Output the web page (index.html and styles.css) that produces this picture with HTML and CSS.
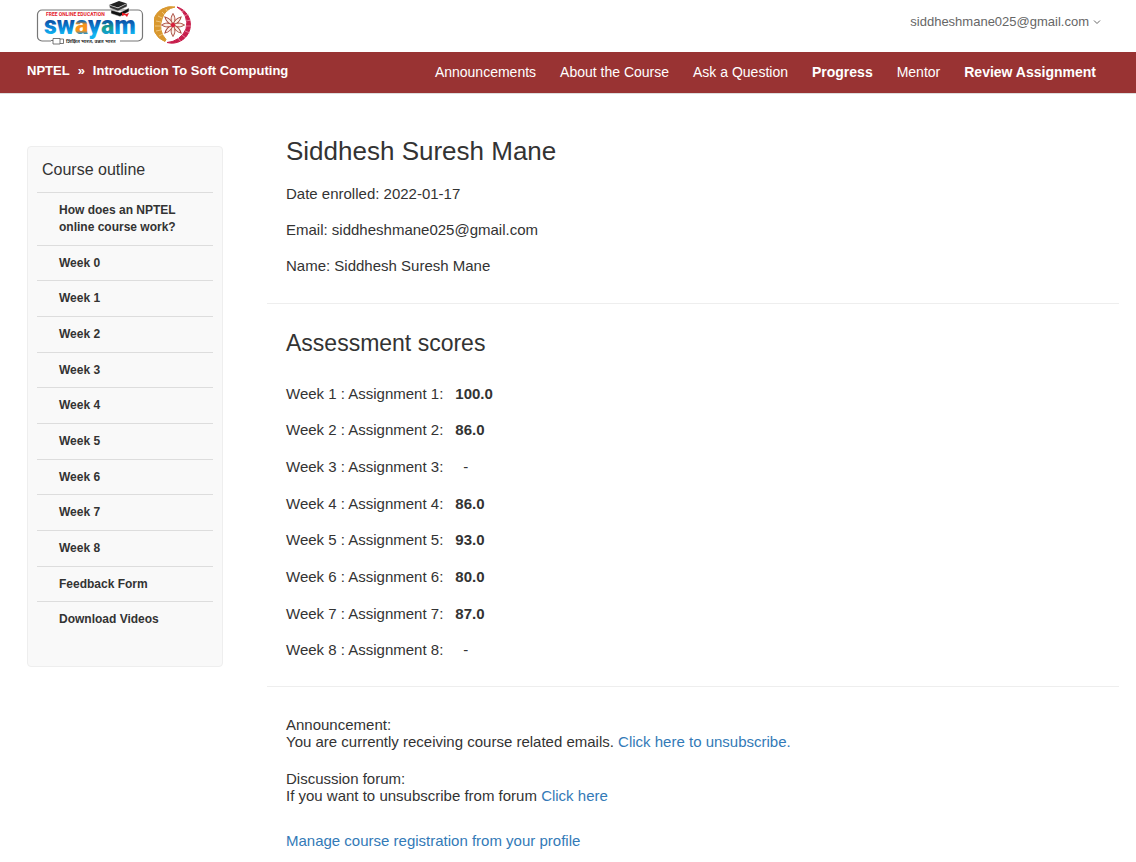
FILE: index.html
```html
<!DOCTYPE html>
<html lang="en">
<head>
<meta charset="utf-8">
<meta name="viewport" content="width=device-width, initial-scale=1">
<title>Introduction To Soft Computing - Progress</title>
<link rel="stylesheet" href="styles.css">
</head>
<body>
<header class="top">
  <a class="logos" href="#" aria-label="Swayam home">
    <svg class="logo-swayam" width="108" height="46" viewBox="0 0 108 46" aria-hidden="true">
      <defs>
        <linearGradient id="blue" gradientUnits="userSpaceOnUse" x1="0" y1="18" x2="0" y2="38">
          <stop offset="0.1" stop-color="#0c4da2"/><stop offset="0.5" stop-color="#0a86d8"/><stop offset="0.8" stop-color="#12b4f0"/>
        </linearGradient>
        <linearGradient id="amber" gradientUnits="userSpaceOnUse" x1="0" y1="18" x2="0" y2="34">
          <stop offset="0.2" stop-color="#1668b0"/><stop offset="0.4" stop-color="#f7941d"/><stop offset="0.8" stop-color="#f7941d"/><stop offset="1" stop-color="#1a8fd0"/>
        </linearGradient>
        <linearGradient id="teal" gradientUnits="userSpaceOnUse" x1="0" y1="18" x2="0" y2="34">
          <stop offset="0.2" stop-color="#0c5aa8"/><stop offset="0.6" stop-color="#16a08c"/><stop offset="1" stop-color="#12a0d8"/>
        </linearGradient>
      </defs>
      <path d="M15 41H6a4.500 4.500 0 0 1-4.500-4.500V14.500A4.500 4.500 0 0 1 6 10H102a4.500 4.500 0 0 1 4.500 4.500V36.500a4.500 4.500 0 0 1-4.500 4.500H84" fill="#fff" stroke="#777" stroke-width="1.200"/>
      <path d="M17 38.500h7v5.500h-7zM24 39h3.500v4.500H24M15 40.500h2" fill="#fff" stroke="#555" stroke-width=".8"/>
      <text class="logo-top" x="10" y="16">FREE ONLINE EDUCATION</text>
      <text class="logo-word" x="8" y="34" fill="url(#blue)">sw<tspan fill="url(#amber)">a</tspan>y<tspan fill="url(#teal)">a</tspan>m</text>
      <text class="logo-tag" x="30" y="43">शिक्षित भारत, उन्नत भारत</text>
      <path d="M73 5 83 1l8 2.500-9 4z" fill="#222"/>
      <path d="M73 5 82 8 91 3.500v3l-9 4.500-8-3z" fill="#333" stroke="#ddd" stroke-width=".5"/>
      <path d="M75 10 84 12.500 93 8v3.500l-9 5-9-3z" fill="#111" stroke="#ddd" stroke-width=".5"/>
      <path d="M86 12.500l4 1.500 3-1-2 4-2-2-3 1z" fill="#ed1c24"/>
    </svg>
    <svg class="logo-nptel" width="38" height="38" viewBox="0 0 38 38" aria-hidden="true">
      <path d="M21 1A18 18 0 0 0 11 35.500 L12 33.500A19 19 0 0 1 8 13 17 17 0 0 1 21 1z" fill="#d9982f" stroke="#d9982f"/>
      <path d="M23 1A18 18 0 0 1 13 36.500 22 22 0 0 0 32 23 19 19 0 0 0 23 1z" fill="#c81e4c" stroke="#c81e4c"/>
      <path d="M12 3l2 3M8 6l3 3M4 10l4 2M2 15l5 1M1 20h6M2 25l5-1M5 30l4-2" stroke="#fbe3b0" stroke-width=".6"/>
      <path d="M27 6l4-2M30 10l5-2M32 15l5-1M32 20h5M31 25l5 2M28 29l4 3M24 32l3 4" stroke="#f5b5c5" stroke-width=".6"/>
      <g fill="#fbeee6" stroke="#a8483c" stroke-width="1">
        <path id="petal" d="M19 19C16 14 17 11 19 7.500 21 11 22 14 19 19z"/>
        <use href="#petal" transform="rotate(45 19 19)"/><use href="#petal" transform="rotate(90 19 19)"/><use href="#petal" transform="rotate(135 19 19)"/><use href="#petal" transform="rotate(180 19 19)"/><use href="#petal" transform="rotate(225 19 19)"/><use href="#petal" transform="rotate(270 19 19)"/><use href="#petal" transform="rotate(315 19 19)"/>
      </g>
      <circle cx="19" cy="19" r="2.200" fill="#d8203c"/>
    </svg>
  </a>
  <button class="account" type="button">siddheshmane025@gmail.com
    <svg width="8" height="6" viewBox="0 0 8 6" aria-hidden="true"><path d="M1 1.500 4 4.500 7 1.500" fill="none" stroke="currentColor"/></svg>
  </button>
</header>
<div class="bar">
  <div class="crumbs"><a href="#">NPTEL</a><span>»</span><a href="#">Introduction To Soft Computing</a></div>
  <nav class="menu">
    <a href="#">Announcements</a>
    <a href="#">About the Course</a>
    <a href="#">Ask a Question</a>
    <a class="strong" href="#">Progress</a>
    <a href="#">Mentor</a>
    <a class="strong" href="#">Review Assignment</a>
  </nav>
</div>
<div class="page">
  <aside class="outline">
    <h2>Course outline</h2>
    <ul>
      <li><a href="#">How does an NPTEL online course work?</a></li>
      <li><a href="#">Week 0</a></li>
      <li><a href="#">Week 1</a></li>
      <li><a href="#">Week 2</a></li>
      <li><a href="#">Week 3</a></li>
      <li><a href="#">Week 4</a></li>
      <li><a href="#">Week 5</a></li>
      <li><a href="#">Week 6</a></li>
      <li><a href="#">Week 7</a></li>
      <li><a href="#">Week 8</a></li>
      <li><a href="#">Feedback Form</a></li>
      <li><a href="#">Download Videos</a></li>
    </ul>
  </aside>
  <main class="content">
    <section class="profile">
      <h1>Siddhesh Suresh Mane</h1>
      <p>Date enrolled: 2022-01-17</p>
      <p>Email: siddheshmane025@gmail.com</p>
      <p>Name: Siddhesh Suresh Mane</p>
    </section>
    <section class="assessment">
      <h2>Assessment scores</h2>
      <table class="scores">
        <tbody>
          <tr><th scope="row">Week 1 : Assignment 1:</th><td>100.0</td></tr>
          <tr><th scope="row">Week 2 : Assignment 2:</th><td>86.0</td></tr>
          <tr><th scope="row">Week 3 : Assignment 3:</th><td class="none">-</td></tr>
          <tr><th scope="row">Week 4 : Assignment 4:</th><td>86.0</td></tr>
          <tr><th scope="row">Week 5 : Assignment 5:</th><td>93.0</td></tr>
          <tr><th scope="row">Week 6 : Assignment 6:</th><td>80.0</td></tr>
          <tr><th scope="row">Week 7 : Assignment 7:</th><td>87.0</td></tr>
          <tr><th scope="row">Week 8 : Assignment 8:</th><td class="none">-</td></tr>
        </tbody>
      </table>
    </section>
    <section class="mail">
      <p>Announcement:<br>You are currently receiving course related emails. <a href="#">Click here to unsubscribe.</a></p>
      <p>Discussion forum:<br>If you want to unsubscribe from forum <a href="#">Click here</a></p>
      <p class="manage"><a href="#">Manage course registration from your profile</a></p>
    </section>
  </main>
</div>
</body>
</html>
```
FILE: styles.css
```css
* { box-sizing: border-box; }
body {
  margin: 0;
  background: #fff;
  color: #333;
  font: 15px/17px "Liberation Sans", Arial, sans-serif;
}
a { text-decoration: none; }
h1, h2, p, ul { margin: 0; padding: 0; font-weight: 400; }
.top {
  display: flex;
  justify-content: space-between;
  height: 52px;
  padding: 0 35px 0 36px;
}
.logos { display: flex; gap: 10px; }
.logo-nptel { margin-top: 6px; }
.logo-top { font: bold 5px Roboto, sans-serif; fill: #e3202b; }
.logo-word { font: 900 25px Roboto, sans-serif; }
.logo-tag { font: bold 5px "Noto Sans Devanagari", "Noto Sans", sans-serif; fill: #333; }
.account {
  display: flex;
  align-items: center;
  gap: 4px;
  align-self: flex-start;
  margin-top: 13px;
  padding: 0;
  border: 0;
  background: none;
  color: #666;
  font: 13px/17px "Liberation Sans", Arial, sans-serif;
}
.bar {
  display: flex;
  justify-content: space-between;
  align-items: center;
  height: 42px;
  padding: 0 40px 0 27px;
  background: #933;
  border-bottom: 1px solid #ddd;
  font-size: 14px;
}
.bar a { color: #fff; }
.crumbs {
  display: flex;
  gap: 8px;
  padding-bottom: 4px;
  color: #fff;
  font-size: 13px;
  font-weight: 700;
}
.menu { display: flex; gap: 24px; }
.strong { font-weight: 700; }
.page {
  display: flex;
  align-items: flex-start;
  gap: 44px;
  padding: 0 17px 12px 27px;
}
.outline {
  flex: 0 0 196px;
  margin-top: 52px;
  padding: 0 9px 29px;
  background: #f9f9f9;
  border: 1px solid #eee;
  border-radius: 4px;
}
.outline h2 { padding: 14px 5px; font-size: 16px; }
.outline ul {
  display: flex;
  flex-direction: column;
  min-height: 445px;
  list-style: none;
}
.outline li {
  flex: 1 0 auto;
  display: flex;
  align-items: center;
  padding: 8px 22px;
  border-top: 1px solid #ddd;
  font-size: 12px;
  font-weight: 700;
}
.outline a { color: #333; }
.content { flex: 1; min-width: 0; }
.content section { padding-left: 19px; }
.content section + section { border-top: 1px solid #eee; }
.profile { padding-top: 41px; padding-bottom: 29px; }
.profile h1 { font-size: 26px; line-height: 32px; margin-bottom: 18px; }
.profile p + p { margin-top: 19px; }
.assessment { padding-top: 26px; padding-bottom: 18px; }
.assessment h2 { font-size: 23px; line-height: 27px; margin-bottom: 18px; }
.scores { height: 293px; border-collapse: collapse; }
.scores th { padding: 0 12px 0 0; font-weight: 400; text-align: left; }
.scores td { padding: 0; font-weight: 700; }
.scores .none { padding-left: 8px; font-weight: 400; }
.mail { padding-top: 29px; }
.mail p + p { margin-top: 20px; }
.mail .manage { margin-top: 28px; }
.mail a { color: #337ab7; }
```
